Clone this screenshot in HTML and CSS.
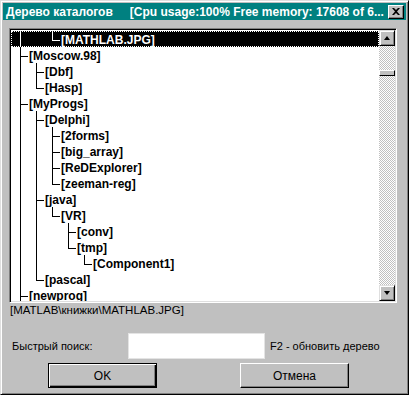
FILE: index.html
```html
<!DOCTYPE html>
<html lang="ru">
<head>
  <meta charset="UTF-8">
  <title>Дерево каталогов</title>
  <link rel="stylesheet" href="styles.css">
</head>
<body>
  <div class="window">
    <div class="titlebar">
      <span class="title">Дерево каталогов</span>
      <span class="title-info">[Cpu usage:100% Free memory: 17608 of 6...</span>
      <button class="close-btn" type="button">
        <svg width="8" height="7" viewBox="0 0 8 7"><path d="M0 0h2l2 2 2-2h2L5 3.5 8 7H6L4 5 2 7H0l3-3.5z" fill="#000"/></svg>
      </button>
    </div>

    <div class="listbox">
      <div class="tree">
        <div class="row selected"><i class="g v"></i><i class="g"></i><i class="g l"></i><span class="name">[MATHLAB.JPG]</span></div>
        <div class="row"><i class="g t"></i><span class="name">[Moscow.98]</span></div>
        <div class="row"><i class="g v"></i><i class="g t"></i><span class="name">[Dbf]</span></div>
        <div class="row"><i class="g v"></i><i class="g l"></i><span class="name">[Hasp]</span></div>
        <div class="row"><i class="g t"></i><span class="name">[MyProgs]</span></div>
        <div class="row"><i class="g v"></i><i class="g t"></i><span class="name">[Delphi]</span></div>
        <div class="row"><i class="g v"></i><i class="g v"></i><i class="g t"></i><span class="name">[2forms]</span></div>
        <div class="row"><i class="g v"></i><i class="g v"></i><i class="g t"></i><span class="name">[big_array]</span></div>
        <div class="row"><i class="g v"></i><i class="g v"></i><i class="g t"></i><span class="name">[ReDExplorer]</span></div>
        <div class="row"><i class="g v"></i><i class="g v"></i><i class="g l"></i><span class="name">[zeeman-reg]</span></div>
        <div class="row"><i class="g v"></i><i class="g t"></i><span class="name">[java]</span></div>
        <div class="row"><i class="g v"></i><i class="g v"></i><i class="g l"></i><span class="name">[VR]</span></div>
        <div class="row"><i class="g v"></i><i class="g v"></i><i class="g"></i><i class="g t"></i><span class="name">[conv]</span></div>
        <div class="row"><i class="g v"></i><i class="g v"></i><i class="g"></i><i class="g l"></i><span class="name">[tmp]</span></div>
        <div class="row"><i class="g v"></i><i class="g v"></i><i class="g"></i><i class="g"></i><i class="g l"></i><span class="name">[Component1]</span></div>
        <div class="row"><i class="g v"></i><i class="g l"></i><span class="name">[pascal]</span></div>
        <div class="row"><i class="g t"></i><span class="name">[newprog]</span></div>
      </div>
      <div class="scrollbar">
        <div class="sb-btn"><span class="arrow-up"></span></div>
        <div class="sb-thumb"></div>
        <div class="sb-btn sb-down"><span class="arrow-down"></span></div>
      </div>
    </div>

    <div class="status">[MATLAB\книжки\MATHLAB.JPG]</div>

    <div class="search-row">
      <label class="search-label" for="quick">Быстрый поиск:</label>
      <input class="search-input" type="text" id="quick">
      <span class="hint">F2 - обновить дерево</span>
    </div>

    <div class="buttons">
      <button class="btn btn-default" type="button">OK</button>
      <button class="btn btn-cancel" type="button">Отмена</button>
    </div>
  </div>
</body>
</html>
```

FILE: styles.css
```css
body {
  margin: 0;
  background-color: #c0c0c0;
  font-family: "Liberation Sans", Arial, sans-serif;
}

.window {
  width: 409px;
  height: 395px;
  box-sizing: border-box;
  padding: 2px;
  background-color: #c0c0c0;
  border-top: 1px solid #dfdfdf;
  border-left: 1px solid #dfdfdf;
  border-right: 1px solid #000;
  border-bottom: 1px solid #000;
  box-shadow: inset 1px 1px #fff, inset -1px -1px #808080;
}

/* title bar */
.titlebar {
  height: 17px;
  display: flex;
  align-items: center;
  padding-left: 3px;
  background-color: #008080;
  color: #fff;
  font-weight: bold;
  font-size: 12px;
  white-space: nowrap;
  overflow: hidden;
}

.title-info {
  margin-left: 17px;
  overflow: hidden;
}

.close-btn {
  margin-left: auto;
  margin-right: 2px;
  flex: none;
  width: 16px;
  height: 14px;
  padding: 0;
  display: flex;
  align-items: center;
  justify-content: center;
  background-color: #c0c0c0;
  border-top: 1px solid #fff;
  border-left: 1px solid #fff;
  border-right: 1px solid #000;
  border-bottom: 1px solid #000;
  box-shadow: inset -1px -1px #808080;
}

/* list box with tree */
.listbox {
  margin: 8px 0 0 6px;
  width: 388px;
  height: 275px;
  box-sizing: border-box;
  padding: 1px;
  display: flex;
  border-top: 1px solid #808080;
  border-left: 1px solid #808080;
  border-right: 1px solid #fff;
  border-bottom: 1px solid #fff;
  box-shadow: inset 1px 1px #000, inset -1px -1px #dfdfdf;
}

.tree {
  flex: 1;
  padding-top: 1px;
  background-color: #fff;
  overflow: hidden;
}

.row {
  --ln: #000;
  height: 16px;
  display: flex;
  padding-left: 1px;
  font-size: 12px;
  font-weight: bold;
  line-height: 18px;
  color: #000;
  white-space: nowrap;
}

.row.selected {
  --ln: #fff;
  background-color: #000;
  color: #fff;
  outline: 1px dotted #fff;
  outline-offset: -1px;
}

.name {
  padding-left: 1px;
}

.g {
  flex: none;
  width: 16px;
  height: 16px;
}

.g.v {
  background: linear-gradient(var(--ln), var(--ln)) 8px 0 / 1px 100% no-repeat;
}

.g.t {
  background:
    linear-gradient(var(--ln), var(--ln)) 8px 0 / 1px 100% no-repeat,
    linear-gradient(var(--ln), var(--ln)) 8px 9px / 8px 1px no-repeat;
}

.g.l {
  background:
    linear-gradient(var(--ln), var(--ln)) 8px 0 / 1px 10px no-repeat,
    linear-gradient(var(--ln), var(--ln)) 8px 9px / 8px 1px no-repeat;
}

/* scrollbar */
.scrollbar {
  width: 16px;
  display: flex;
  flex-direction: column;
  background: repeating-conic-gradient(#c0c0c0 0 25%, #fff 0 50%) 0 0 / 2px 2px;
}

.sb-btn {
  height: 16px;
  box-sizing: border-box;
  display: flex;
  align-items: center;
  justify-content: center;
  background-color: #c0c0c0;
  border-top: 1px solid #dfdfdf;
  border-left: 1px solid #dfdfdf;
  border-right: 1px solid #000;
  border-bottom: 1px solid #000;
  box-shadow: inset 1px 1px #fff, inset -1px -1px #808080;
}

.sb-down {
  margin-top: auto;
}

.sb-thumb {
  margin-top: 24px;
  height: 6px;
  box-sizing: border-box;
  background-color: #c0c0c0;
  border-top: 1px solid #fff;
  border-left: 1px solid #fff;
  border-right: 1px solid #000;
  border-bottom: 1px solid #000;
}

.arrow-up {
  border-left: 3px solid transparent;
  border-right: 3px solid transparent;
  border-bottom: 4px solid #000;
}

.arrow-down {
  border-left: 3px solid transparent;
  border-right: 3px solid transparent;
  border-top: 4px solid #000;
}

/* status path */
.status {
  margin: 1px 0 0 7px;
  height: 13px;
  font-size: 11.5px;
  line-height: 13px;
  color: #000;
}

/* quick search */
.search-row {
  margin-top: 16px;
  height: 26px;
  display: flex;
  align-items: center;
  font-size: 11px;
  color: #000;
}

.search-label {
  width: 116px;
  margin-left: 9px;
}

.search-input {
  width: 137px;
  height: 26px;
  box-sizing: border-box;
  margin: 0;
  border: 1px solid #e4e4e4;
  background-color: #fff;
}

.hint {
  margin-left: 5px;
}

/* dialog buttons */
.buttons {
  margin-top: 4px;
  display: flex;
}

.btn {
  width: 109px;
  height: 25px;
  box-sizing: border-box;
  padding: 0;
  font-family: "Liberation Sans", Arial, sans-serif;
  font-size: 12px;
  color: #000;
  background-color: #c0c0c0;
}

.btn-default {
  margin-left: 45px;
  border: 1px solid #000;
  box-shadow: inset 1px 1px #fff, inset -1px -1px #000, inset -2px -2px #808080;
}

.btn-cancel {
  margin-left: 83px;
  border-top: 1px solid #fff;
  border-left: 1px solid #fff;
  border-right: 1px solid #000;
  border-bottom: 1px solid #000;
  box-shadow: inset -1px -1px #808080;
}
```
